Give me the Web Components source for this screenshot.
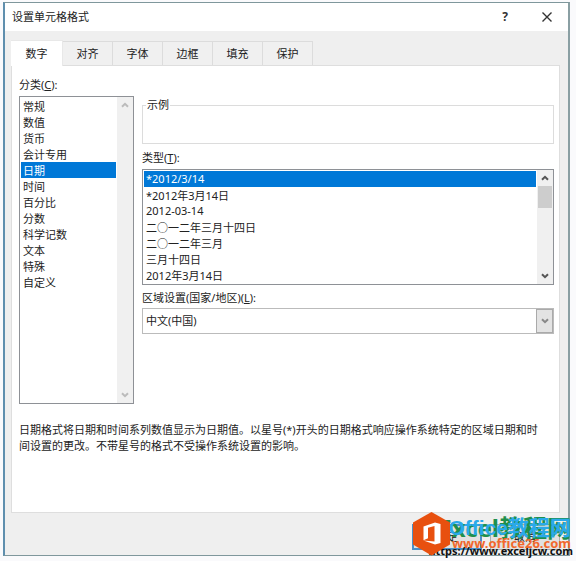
<!DOCTYPE html>
<html lang="zh-CN">
<head>
<meta charset="utf-8">
<meta name="viewport" content="width=device-width, initial-scale=1">
<title>设置单元格格式</title>
<style>
body {
  margin: 0;
  padding: 2px 6px 4px 3px;
  background: #fafafc;
  color: #222;
  font: 11px/16px "Noto Sans", "Noto Sans CJK SC", sans-serif;
}
</style>
</head>
<body>
<format-dialog></format-dialog>

<script>
const template = (html) => {
  const el = document.createElement('template');
  el.innerHTML = html;
  return el;
};

const chevron = (direction) => /* html */ `
<svg width="10" height="8" viewBox="0 0 10 8" fill="none" stroke="currentColor" stroke-width="2" aria-hidden="true">
  <path d="${direction === 'up' ? 'M2 5.8 5 2.8l3 3' : 'M2 2.2l3 3 3-3'}"/>
</svg>`;

// <scroll-strip inactive>: the two arrows and the thumb next to a list
const SCROLL_TEMPLATE = template(/* html */ `
<style>
:host {
  display: flex;
  flex-direction: column;
  width: 16px;
  background: #f0f0f0;
  color: #555;
}
:host([inactive]) { color: #bbb; }
button {
  display: grid;
  place-items: center;
  height: 16px;
  padding: 0;
  border: 0;
  background: none;
  color: inherit;
}
.track { flex: 1; }
.thumb {
  height: 22px;
  margin: 0 1px;
  background: #cdcdcd;
}
:host([inactive]) .thumb { display: none; }
</style>
<button type="button" aria-label="向上滚动">${chevron('up')}</button>
<div class="track"><div class="thumb"></div></div>
<button type="button" aria-label="向下滚动">${chevron('down')}</button>
`);

class ScrollStrip extends HTMLElement {
  constructor() {
    super();
    this.attachShadow({ mode: 'open' }).appendChild(SCROLL_TEMPLATE.content.cloneNode(true));
  }
}
customElements.define('scroll-strip', ScrollStrip);

// <list-box items="a|b" selected="0" rows="7">label</list-box>
const LIST_TEMPLATE = template(/* html */ `
<style>
:host {
  display: flex;
  flex-direction: column;
  gap: 3px;
}
.box {
  display: flex;
  flex: 1;
  border: 1px solid #8e9196;
  background: white;
}
select {
  flex: 1;
  min-width: 0;
  margin: 0;
  padding: 1px;
  border: 0;
  outline: 0;
  appearance: none;
  background: none;
  overflow: hidden;
  color: inherit;
  font: inherit;
}
option {
  height: 16px;
  min-height: 16px;
  padding: 0 2px;
  box-sizing: border-box;
  line-height: 16px;
}
option:checked {
  background: #0078d7 linear-gradient(#0078d7, #0078d7);
  color: white;
}
</style>
<label for="list"><slot></slot></label>
<div class="box">
  <select id="list"></select>
  <scroll-strip></scroll-strip>
</div>
`);

class ListBox extends HTMLElement {
  constructor() {
    super();
    this.attachShadow({ mode: 'open' }).appendChild(LIST_TEMPLATE.content.cloneNode(true));
  }

  connectedCallback() {
    const select = this.shadowRoot.querySelector('select');
    const items = this.getAttribute('items').split('|');
    const rows = Number(this.getAttribute('rows'));
    select.size = rows;
    select.replaceChildren(...items.map((item) => new Option(item)));
    select.selectedIndex = Number(this.getAttribute('selected'));
    this.shadowRoot.querySelector('scroll-strip').toggleAttribute('inactive', items.length <= rows);
  }
}
customElements.define('list-box', ListBox);

// <drop-down items="a|b">label</drop-down>
const DROP_TEMPLATE = template(/* html */ `
<style>
:host {
  display: flex;
  flex-direction: column;
  gap: 2px;
}
.field {
  display: grid;
  grid-template-columns: 1fr 17px;
  height: 26px;
  box-sizing: border-box;
  border: 1px solid #bbb;
  background: white;
}
select {
  grid-area: 1 / 1 / 2 / 3;
  min-width: 0;
  padding: 0 3px;
  border: 0;
  outline: 0;
  appearance: none;
  background: none;
  color: inherit;
  font: inherit;
}
.arrow {
  grid-area: 1 / 2;
  display: grid;
  place-items: center;
  border: 1px solid #aaa;
  background: #e3e3e3;
  color: #888;
  pointer-events: none;
}
</style>
<label for="drop"><slot></slot></label>
<div class="field">
  <select id="drop"></select>
  <span class="arrow">${chevron('down')}</span>
</div>
`);

class DropDown extends HTMLElement {
  constructor() {
    super();
    this.attachShadow({ mode: 'open' }).appendChild(DROP_TEMPLATE.content.cloneNode(true));
  }

  connectedCallback() {
    const items = this.getAttribute('items').split('|');
    this.shadowRoot.querySelector('select').replaceChildren(...items.map((item) => new Option(item)));
  }
}
customElements.define('drop-down', DropDown);

// <tab-bar tabs="a|b">
const TAB_TEMPLATE = template(/* html */ `
<style>
:host {
  display: flex;
  align-items: flex-end;
}
button {
  width: 50px;
  height: 24px;
  padding: 0;
  border: 1px solid #dcdcdc;
  border-width: 1px 1px 0 0;
  background: #f0f0f0;
  color: inherit;
  font: inherit;
}
button[aria-selected="true"] {
  width: 52px;
  height: 26px;
  margin-bottom: -1px;
  border-color: #e8e8e8;
  background: white;
  z-index: 1;
}
</style>
`);

class TabBar extends HTMLElement {
  constructor() {
    super();
    this.attachShadow({ mode: 'open' }).appendChild(TAB_TEMPLATE.content.cloneNode(true));
  }

  connectedCallback() {
    this.setAttribute('role', 'tablist');
    this.getAttribute('tabs').split('|').forEach((name, index) => {
      const tab = document.createElement('button');
      tab.type = 'button';
      tab.textContent = name;
      tab.setAttribute('role', 'tab');
      tab.setAttribute('aria-selected', String(index === 0));
      this.shadowRoot.appendChild(tab);
    });
  }
}
customElements.define('tab-bar', TabBar);

// Site marks stamped over the dialog's lower right corner
const MARK_TEMPLATE = template(/* html */ `
<style>
:host {
  display: block;
  width: 161px;
  height: 48px;
  white-space: nowrap;
  font-weight: 700;
  pointer-events: none;
}
.name, .url, svg { position: absolute; }
.name {
  right: 3px;
  top: 0;
  font-size: 24px;
  line-height: 32px;
}
.green { color: #1f8f4c; }
.blue {
  color: #2aa9ea;
  font-family: "Liberation Sans", "Noto Sans CJK SC", sans-serif;
  font-size: 21px;
}
.url {
  right: 3px;
  top: 23px;
  color: #f2682c;
  font-size: 13px;
  line-height: 16px;
}
.black {
  right: 1px;
  top: 31px;
  color: #111;
  font-size: 11px;
}
svg {
  left: 0;
  top: 0;
}
</style>
<span class="name green">Excel教程网</span>
<span class="url black">https://www.exceljcw.com</span>
<span class="name blue">Office教程网</span>
<span class="url">www.office26.com</span>
<svg width="37" height="44" viewBox="0 0 37 44" aria-hidden="true">
  <path fill="#e8500f" d="M18.500 0 37 10.500v22L18.500 43.500 0 32.500v-22z"/>
  <path fill="#fff" d="M10.500 14.500 22 10.500l5.500 1.500v19L22 32.500l-11.500-4 11 1V14l-6.500 1.800v10.400l-4.500 2z"/>
</svg>
`);

class SiteMark extends HTMLElement {
  constructor() {
    super();
    this.attachShadow({ mode: 'open' }).appendChild(MARK_TEMPLATE.content.cloneNode(true));
  }
}
customElements.define('site-mark', SiteMark);

const DIALOG_TEMPLATE = template(/* html */ `
<style>
:host {
  display: block;
  position: relative;
  border: 1px solid #7f979c;
  border-left: 2px solid #5f8fae;
  border-right: 2px solid #8a9fa3;
  background: #efefef;
}
header {
  display: flex;
  align-items: center;
  height: 28px;
  padding: 0 7px;
  background: white;
}
h1 {
  flex: 1;
  margin: 0;
  font: inherit;
}
header button {
  display: grid;
  place-items: center;
  width: 28px;
  height: 24px;
  margin-left: 14px;
  padding: 0;
  border: 0;
  background: none;
  color: #333;
  font: bold 12px/16px "Noto Sans", sans-serif;
}
tab-bar { margin: 9px 6px 0; }
main {
  display: grid;
  grid-template-columns: 115px minmax(0, 1fr);
  column-gap: 8px;
  margin: 0 8px 0 6px;
  padding: 11px 5px 58px 7px;
  border: 1px solid #dedede;
  background: white;
}
.category { height: 327px; }
.settings {
  display: flex;
  flex-direction: column;
  padding-top: 20px;
}
fieldset {
  height: 47px;
  box-sizing: border-box;
  margin: 0 0 6px;
  padding: 0 3px;
  border: 1px solid #dcdcdc;
}
legend { padding: 0 1px; }
drop-down { margin-top: 5px; }
p {
  grid-column: 1 / -1;
  margin: 18px 0 0;
  padding-right: 12px;
}
footer {
  display: flex;
  justify-content: flex-end;
  gap: 8px;
  padding: 11px 8px 5px;
}
footer button {
  width: 70px;
  height: 26px;
  padding: 0;
  border: 1px solid #adadad;
  background: #e1e1e1;
  color: inherit;
  font: inherit;
}
footer .primary { border: 2px solid #4a90c8; }
site-mark {
  position: absolute;
  right: -6px;
  bottom: -5px;
}
</style>
<header>
  <h1>设置单元格格式</h1>
  <button type="button" aria-label="帮助">?</button>
  <button type="button" aria-label="关闭">
    <svg width="12" height="12" viewBox="0 0 12 12" stroke="currentColor" stroke-width="1.400" aria-hidden="true">
      <path d="M1.500 1.500l9 9M10.500 1.500l-9 9"/>
    </svg>
  </button>
</header>
<tab-bar tabs="数字|对齐|字体|边框|填充|保护"></tab-bar>
<main>
  <list-box class="category" rows="12" selected="4"
    items="常规|数值|货币|会计专用|日期|时间|百分比|分数|科学记数|文本|特殊|自定义">分类(<u>C</u>):</list-box>
  <div class="settings">
    <fieldset><legend>示例</legend></fieldset>
    <list-box class="type" rows="7" selected="0"
      items="*2012/3/14|*2012年3月14日|2012-03-14|二○一二年三月十四日|二○一二年三月|三月十四日|2012年3月14日|">类型(<u>T</u>):</list-box>
    <drop-down items="中文(中国)">区域设置(国家/地区)(<u>L</u>):</drop-down>
  </div>
  <p>日期格式将日期和时间系列数值显示为日期值。以星号(*)开头的日期格式响应操作系统特定的区域日期和时间设置的更改。不带星号的格式不受操作系统设置的影响。</p>
</main>
<footer>
  <button type="button" class="primary">确定</button>
  <button type="button">取消</button>
</footer>
<site-mark></site-mark>
`);

class FormatDialog extends HTMLElement {
  constructor() {
    super();
    this.attachShadow({ mode: 'open' }).appendChild(DIALOG_TEMPLATE.content.cloneNode(true));
  }
}
customElements.define('format-dialog', FormatDialog);
</script>
</body>
</html>
